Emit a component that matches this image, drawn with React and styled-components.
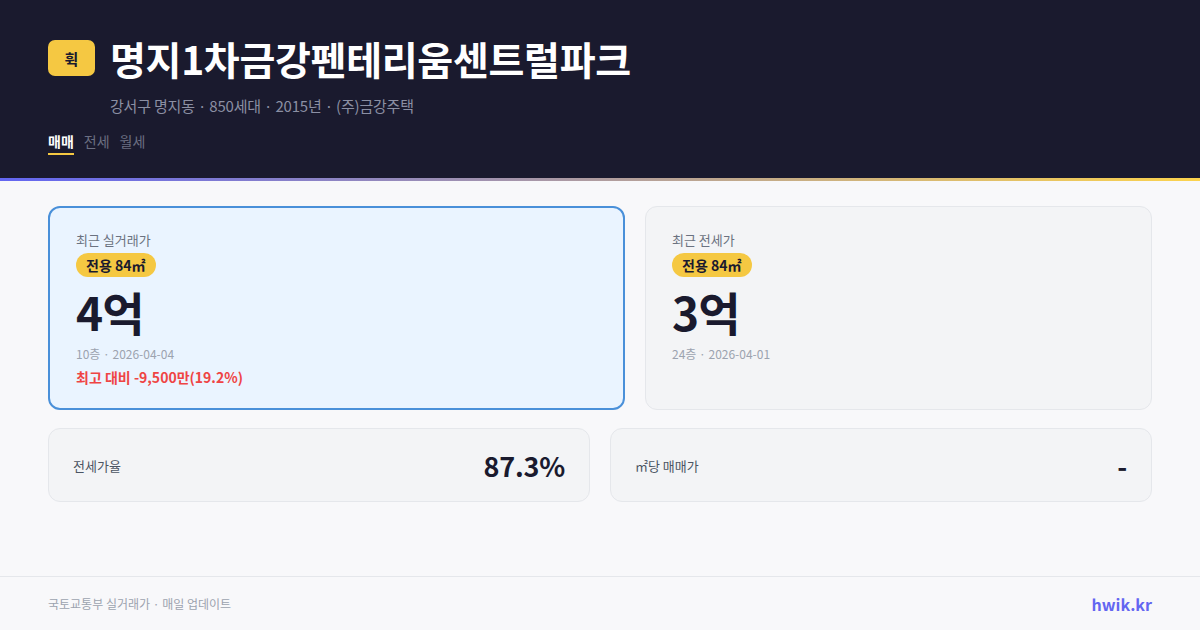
import React from "react";
import styled, { createGlobalStyle } from "styled-components";

const Global = createGlobalStyle`
  * { box-sizing: border-box; }
  html, body { margin: 0; padding: 0; }
  body {
    background: #f8f8fa;
    font-family: "Noto Sans CJK KR", "Noto Sans", sans-serif;
    width: 1200px;
    height: 630px;
    overflow: hidden;
  }
`;

const Page = styled.div`
  width: 1200px;
  height: 630px;
  display: flex;
  flex-direction: column;
  background: #f8f8fa;
`;

const Header = styled.header`
  background: #1a1a2e;
  padding: 35px 48px 0;
  height: 178px;
  display: flex;
  flex-direction: column;
`;

const TitleRow = styled.div`
  display: flex;
  align-items: center;
  gap: 15px;
`;

const Logo = styled.div`
  width: 47px;
  height: 36px;
  border-radius: 7px;
  background: #f5c842;
  color: #1a1a2e;
  font-weight: 700;
  font-size: 15px;
  display: flex;
  align-items: center;
  justify-content: center;
`;

const Title = styled.h1`
  margin: 0;
  color: #ffffff;
  font-size: 39px;
  font-weight: 700;
  line-height: 46px;
  letter-spacing: -0.3px;
`;

const Sub = styled.div`
  margin: 14px 0 0 62px;
  color: #8b8fa3;
  font-size: 15px;
  line-height: 22px;
  letter-spacing: -0.2px;
`;

const Tabs = styled.div`
  display: flex;
  gap: 10px;
  margin-top: 14px;
`;

const Tab = styled.div`
  font-size: 14px;
  line-height: 20px;
  font-weight: ${(p) => (p.$active ? 700 : 400)};
  color: ${(p) => (p.$active ? "#ffffff" : "#6b6f82")};
  padding-bottom: 2px;
  border-bottom: 2px solid ${(p) => (p.$active ? "#f5c842" : "transparent")};
`;

const Accent = styled.div`
  height: 3px;
  background: linear-gradient(90deg, #6366f1, #fcd34d);
`;

const Main = styled.main`
  flex: 1;
  padding: 25px 48px 0;
  display: flex;
  flex-direction: column;
  gap: 18px;
`;

const TopRow = styled.div`
  display: grid;
  grid-template-columns: 577px 1fr;
  gap: 20px;
`;

const PriceCard = styled.div`
  height: 204px;
  border-radius: 12px;
  padding: ${(p) => (p.$hl ? "23px 26px" : "24px 26px")};
  background: ${(p) => (p.$hl ? "#eaf4ff" : "#f3f4f6")};
  border: ${(p) => (p.$hl ? "2px solid #4a90d9" : "1px solid #e5e7eb")};
  display: flex;
  flex-direction: column;
  align-items: flex-start;
`;

const Label = styled.div`
  font-size: 13px;
  line-height: 18px;
  color: #6b7280;
`;

const Badge = styled.div`
  margin-top: 4px;
  background: #f5c842;
  color: #1a1a2e;
  font-weight: 700;
  font-size: 14px;
  line-height: 24px;
  padding: 0 11px 0 10px;
  border-radius: 12px;
`;

const Price = styled.div`
  font-size: 46px;
  font-weight: 700;
  line-height: 58px;
  color: #1a1a2e;
  letter-spacing: -1px;
  margin-top: 5px;
`;

const Meta = styled.div`
  margin-top: 6px;
  font-size: 12px;
  line-height: 16px;
  color: #9ca3af;
`;

const Diff = styled.div`
  margin-top: 5px;
  font-size: 14px;
  line-height: 20px;
  font-weight: 600;
  color: #ef4444;
`;

const BottomRow = styled.div`
  display: grid;
  grid-template-columns: 1fr 1fr;
  gap: 20px;
`;

const StatCard = styled.div`
  height: 74px;
  border-radius: 12px;
  background: #f3f4f6;
  border: 1px solid #e5e7eb;
  padding: 0 24px;
  display: flex;
  align-items: center;
  justify-content: space-between;
`;

const StatLabel = styled.div`
  font-size: 13px;
  color: #4b5563;
`;

const StatValue = styled.div`
  font-size: 27px;
  font-weight: 700;
  color: #1a1a2e;
  letter-spacing: -0.2px;
`;

const Footer = styled.footer`
  height: 54px;
  border-top: 1px solid #e5e7eb;
  padding: 0 48px;
  display: flex;
  align-items: center;
  justify-content: space-between;
`;

const FootText = styled.div`
  font-size: 12px;
  color: #9ca3af;
`;

const Brand = styled.div`
  font-size: 16px;
  font-weight: 700;
  color: #6366f1;
`;

export default function App() {
  return (
    <Page>
      <Global />
      <Header>
        <TitleRow>
          <Logo>휙</Logo>
          <Title>명지1차금강펜테리움센트럴파크</Title>
        </TitleRow>
        <Sub>강서구 명지동 · 850세대 · 2015년 · (주)금강주택</Sub>
        <Tabs>
          <Tab $active>매매</Tab>
          <Tab>전세</Tab>
          <Tab>월세</Tab>
        </Tabs>
      </Header>
      <Accent />
      <Main>
        <TopRow>
          <PriceCard $hl>
            <Label>최근 실거래가</Label>
            <Badge>전용 84㎡</Badge>
            <Price>4억</Price>
            <Meta>10층 · 2026-04-04</Meta>
            <Diff>최고 대비 -9,500만(19.2%)</Diff>
          </PriceCard>
          <PriceCard>
            <Label>최근 전세가</Label>
            <Badge>전용 84㎡</Badge>
            <Price>3억</Price>
            <Meta>24층 · 2026-04-01</Meta>
          </PriceCard>
        </TopRow>
        <BottomRow>
          <StatCard>
            <StatLabel>전세가율</StatLabel>
            <StatValue>87.3%</StatValue>
          </StatCard>
          <StatCard>
            <StatLabel>㎡당 매매가</StatLabel>
            <StatValue>-</StatValue>
          </StatCard>
        </BottomRow>
      </Main>
      <Footer>
        <FootText>국토교통부 실거래가 · 매일 업데이트</FootText>
        <Brand>hwik.kr</Brand>
      </Footer>
    </Page>
  );
}
